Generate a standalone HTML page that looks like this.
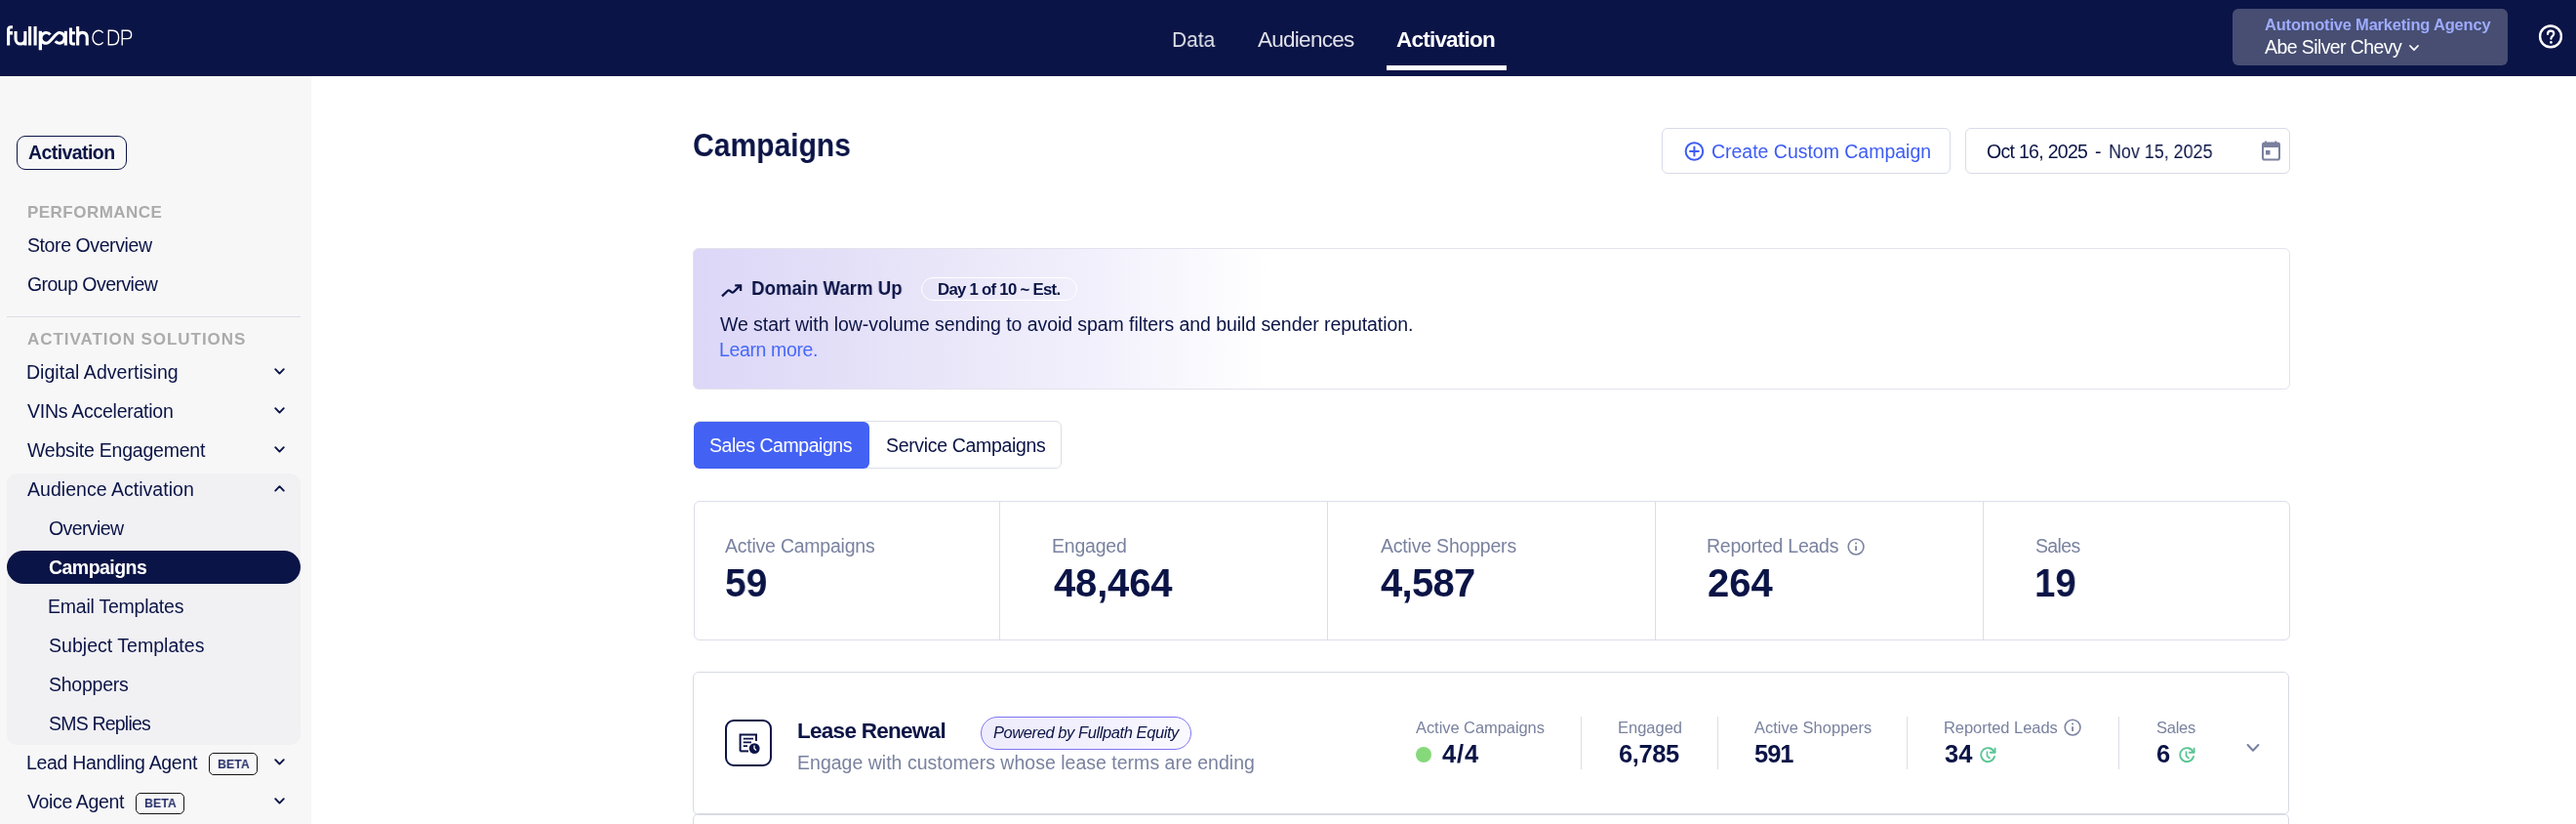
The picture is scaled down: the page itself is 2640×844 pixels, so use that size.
<!DOCTYPE html>
<html><head><meta charset="utf-8"><title>Campaigns</title>
<style>
html,body{margin:0;padding:0;}
body{width:2640px;height:844px;overflow:hidden;position:relative;background:#ffffff;font-family:'Liberation Sans', sans-serif;}
.t{position:absolute;white-space:nowrap;line-height:1;will-change:transform;}
.a{position:absolute;box-sizing:border-box;}
svg{position:absolute;overflow:visible;}
</style></head><body>
<!-- header -->
<div class="a" style="left:0;top:0;width:2640px;height:78px;background:#0b1446;"></div>
<svg style="left:0;top:0" width="140" height="60" viewBox="0 0 140 60"><g fill="none" stroke="#ffffff" stroke-width="3.1">
<path d="M8.6 46.5 V30.5 Q8.6 27.75 11.35 27.75 H13"/><path d="M8.6 33.8 H13" stroke-width="3.5"/>
<path d="M16.05 31.9 V40.1 A4.9 4.9 0 0 0 25.85 40.1 V31.9 M25.85 40 V46.5"/>
<path d="M30.6 27.1 V46.5 M36.1 27.1 V46.5"/>
<path d="M41.35 31.8 V51.3" stroke-width="3.3"/>
<path d="M51.54 35.43 A5.4 5.4 0 1 0 47.4 44.3 C51.5 44.3 56.7 33.5 60.8 33.5 A5.4 5.4 0 1 1 56.66 42.37"/>
<path d="M67.3 31.8 V46.5"/>
<path d="M72.45 28.6 V42.5 Q72.45 45 75 45 H76.9 M72.45 33.7 H76.9"/>
<path d="M79.65 27.1 V46.5 M79.65 39 Q79.65 33.4 84.45 33.4 Q89.25 33.4 89.25 39 V46.5"/>
</g><g fill="none" stroke="#ffffff" stroke-width="1.4">
<path d="M105.6 33.6 A6.1 7.3 0 1 0 105.6 43.4"/>
<path d="M111.3 31.2 H115.2 Q121.6 31.2 121.6 38.5 Q121.6 45.8 115.2 45.8 H111.3 Z"/>
<path d="M125.2 46.5 V31.2 H130.5 Q134.6 31.2 134.6 35.4 Q134.6 39.6 130.5 39.6 H125.2"/>
</g></svg>
<div class="a" style="left:1421px;top:67px;width:123px;height:5px;background:#ffffff;"></div>
<div class="a" style="left:2288px;top:9px;width:282px;height:58px;background:#474e72;border-radius:6px;"></div>
<svg style="left:2469px;top:46px" width="10" height="7" viewBox="0 0 10 7"><polyline points="1,1 5,5.2 9,1" fill="none" stroke="#ffffff" stroke-width="1.8" stroke-linecap="round" stroke-linejoin="round"/></svg>
<svg style="left:2601px;top:25px" width="26" height="26" viewBox="0 0 26 26"><circle cx="13" cy="12.4" r="10.9" fill="none" stroke="#ffffff" stroke-width="2.4"/><path d="M10 9.9 C10 8 11.5 6.7 13.2 6.7 C14.9 6.7 16.3 7.9 16.3 9.6 C16.3 11.8 13.4 12 13.4 14.7" fill="none" stroke="#ffffff" stroke-width="2.2" stroke-linecap="round"/><circle cx="13.4" cy="18.4" r="1.35" fill="#ffffff"/></svg>
<!-- sidebar -->
<div class="a" style="left:0;top:78px;width:319px;height:766px;background:#f7f7f7;"></div>
<div class="a" style="left:17px;top:139px;width:113px;height:35px;border:1.5px solid #0b1446;border-radius:9px;"></div>
<div class="a" style="left:7px;top:324px;width:301px;height:1.3px;background:#dcdee8;"></div>
<div class="a" style="left:7px;top:484.5px;width:301px;height:278.5px;background:#f1f1f4;border-radius:10px;"></div>
<div class="a" style="left:7px;top:564px;width:301px;height:34px;background:#0b1446;border-radius:17px;"></div>
<div class="a" style="left:214.1px;top:771.2px;width:49.6px;height:22.5px;border:1.5px solid #141414;border-radius:5px;"></div>
<div class="a" style="left:139.2px;top:811.5px;width:49.6px;height:22.5px;border:1.5px solid #141414;border-radius:5px;"></div>
<svg style="left:280.7px;top:377px" width="11" height="7" viewBox="0 0 11 7"><polyline points="1.2,1.2 5.5,5.6 9.8,1.2" fill="none" stroke="#0b1446" stroke-width="1.9" stroke-linecap="round" stroke-linejoin="round"/></svg>
<svg style="left:280.7px;top:416.8px" width="11" height="7" viewBox="0 0 11 7"><polyline points="1.2,1.2 5.5,5.6 9.8,1.2" fill="none" stroke="#0b1446" stroke-width="1.9" stroke-linecap="round" stroke-linejoin="round"/></svg>
<svg style="left:280.7px;top:456.8px" width="11" height="7" viewBox="0 0 11 7"><polyline points="1.2,1.2 5.5,5.6 9.8,1.2" fill="none" stroke="#0b1446" stroke-width="1.9" stroke-linecap="round" stroke-linejoin="round"/></svg>
<svg style="left:280.7px;top:497px" width="11" height="7" viewBox="0 0 11 7"><polyline points="1.2,5.6 5.5,1.2 9.8,5.6" fill="none" stroke="#0b1446" stroke-width="1.9" stroke-linecap="round" stroke-linejoin="round"/></svg>
<svg style="left:280.7px;top:776.8px" width="11" height="7" viewBox="0 0 11 7"><polyline points="1.2,1.2 5.5,5.6 9.8,1.2" fill="none" stroke="#0b1446" stroke-width="1.9" stroke-linecap="round" stroke-linejoin="round"/></svg>
<svg style="left:280.7px;top:816.8px" width="11" height="7" viewBox="0 0 11 7"><polyline points="1.2,1.2 5.5,5.6 9.8,1.2" fill="none" stroke="#0b1446" stroke-width="1.9" stroke-linecap="round" stroke-linejoin="round"/></svg>
<!-- main: buttons -->
<div class="a" style="left:1703px;top:131px;width:296px;height:47px;border:1.5px solid #d8dbe8;border-radius:6px;"></div>
<svg style="left:1726px;top:145px" width="21" height="21" viewBox="0 0 21 21"><circle cx="10.4" cy="10" r="8.8" fill="none" stroke="#3d5cf5" stroke-width="2"/><path d="M10.4 5.6 V14.4 M6 10 H14.8" stroke="#3d5cf5" stroke-width="2" stroke-linecap="round"/></svg>
<div class="a" style="left:2014px;top:131px;width:332.5px;height:47px;border:1.5px solid #d8dbe8;border-radius:6px;"></div>
<svg style="left:2318px;top:144px" width="19" height="20" viewBox="0 0 19 20"><path d="M4 0.5 V3 M14.2 0.5 V3" stroke="#7a809e" stroke-width="1.8"/><rect x="1" y="2.6" width="17" height="17" rx="1.8" fill="none" stroke="#7a809e" stroke-width="2"/><rect x="1" y="2.6" width="17" height="4.4" fill="#7a809e"/><rect x="4" y="10" width="4.5" height="4.5" fill="#7a809e"/></svg>
<!-- banner -->
<div class="a" style="left:710px;top:254px;width:1636.5px;height:145px;border:1.3px solid #e2e3ec;border-radius:6px;background:linear-gradient(90deg,#dcd7f7 0%,#e6e2f8 12%,#f3f1fc 26%,#ffffff 36%,#ffffff 100%);"></div>
<svg style="left:732px;top:282.8px" width="36" height="28" viewBox="0 0 36 28"><path d="M8 20.4 L13.6 15 Q14.8 13.8 16 14.8 L17.6 16.2 Q18.8 17.2 20 16 L26.4 9.6" fill="none" stroke="#0b1446" stroke-width="2.3" stroke-linecap="butt" stroke-linejoin="round"/><path d="M21.2 9.4 H27.1 V15" fill="none" stroke="#0b1446" stroke-width="2.3" stroke-linecap="butt" stroke-linejoin="miter"/></svg>
<div class="a" style="left:944.3px;top:284.3px;width:160.2px;height:23.3px;border:1.4px solid #ffffff;border-radius:12px;"></div>
<!-- tabs -->
<div class="a" style="left:710.9px;top:431.3px;width:377.6px;height:49px;border:1.5px solid #dcdee8;border-radius:6px;background:#fff;"></div>
<div class="a" style="left:710.9px;top:431.5px;width:180.5px;height:48.5px;background:#4361f3;border-radius:6px;"></div>
<!-- stats card -->
<div class="a" style="left:710.5px;top:513px;width:1636px;height:142.5px;border:1.5px solid #dcdee8;border-radius:6px;"></div>
<div class="a" style="left:1023.5px;top:513px;width:1.4px;height:142px;background:#dcdee8;"></div>
<div class="a" style="left:1359.8px;top:513px;width:1.4px;height:142px;background:#dcdee8;"></div>
<div class="a" style="left:1695.8px;top:513px;width:1.4px;height:142px;background:#dcdee8;"></div>
<div class="a" style="left:2032px;top:513px;width:1.4px;height:142px;background:#dcdee8;"></div>
<svg style="left:1892.5px;top:550.5px" width="18" height="18" viewBox="0 0 18 18"><circle cx="9.1" cy="9.1" r="7.9" fill="none" stroke="#7c84a2" stroke-width="1.6"/><path d="M9.1 8.2 V13.1" stroke="#7c84a2" stroke-width="1.8"/><rect x="8.2" y="4.6" width="1.8" height="1.7" fill="#7c84a2"/></svg>
<!-- lease card -->
<div class="a" style="left:710.4px;top:688.4px;width:1636px;height:146.6px;border:1.5px solid #d8dae4;border-radius:6px;"></div>
<div class="a" style="left:710.4px;top:833px;width:1636px;height:30px;border:1.5px solid #d8dae4;border-radius:6px;"></div>
<div class="a" style="left:743.2px;top:737px;width:47.6px;height:47.6px;border:2.8px solid #0b1446;border-radius:9px;"></div>
<svg style="left:757px;top:751px" width="23" height="22" viewBox="0 0 23 22"><path d="M1.6 18.4 V1.6 H18 V8" fill="none" stroke="#0b1446" stroke-width="2"/><path d="M1.6 18.4 H10" stroke="#0b1446" stroke-width="2"/><path d="M4.8 5.6 H15 M4.8 9.4 H13 M4.8 13.2 H9" stroke="#0b1446" stroke-width="1.8"/><circle cx="16.2" cy="15.6" r="5.4" fill="#0b1446"/><path d="M16 12.6 V15.8 L18 17.6" fill="none" stroke="#ffffff" stroke-width="1.3"/></svg>
<div class="a" style="left:1005px;top:734.2px;width:215.6px;height:33.6px;border:1.5px solid #8075f3;border-radius:17px;background:linear-gradient(90deg,#eeecfc,#f3f1fd 60%,#faf9fe);"></div>
<!-- metric dividers -->
<div class="a" style="left:1620px;top:734px;width:1.4px;height:53.5px;background:#dcdee8;"></div>
<div class="a" style="left:1759.8px;top:734px;width:1.4px;height:53.5px;background:#dcdee8;"></div>
<div class="a" style="left:1954px;top:734px;width:1.4px;height:53.5px;background:#dcdee8;"></div>
<div class="a" style="left:2170.8px;top:734px;width:1.4px;height:53.5px;background:#dcdee8;"></div>
<div class="a" style="left:1450.7px;top:765px;width:16.3px;height:16.3px;background:#86d97a;border-radius:50%;"></div>
<svg style="left:2115px;top:735.5px" width="18" height="18" viewBox="0 0 18 18"><circle cx="9.1" cy="9.1" r="7.9" fill="none" stroke="#7c84a2" stroke-width="1.6"/><path d="M9.1 8.2 V13.1" stroke="#7c84a2" stroke-width="1.8"/><rect x="8.2" y="4.6" width="1.8" height="1.7" fill="#7c84a2"/></svg>
<svg style="left:2028px;top:765px" width="18" height="17" viewBox="0 0 18 17"><path d="M15.6 5.2 A7 7 0 1 0 16 10" fill="none" stroke="#5bc596" stroke-width="1.9" stroke-linecap="round"/><path d="M16.6 1.8 V5.8 H11.8" fill="none" stroke="#5bc596" stroke-width="1.9" stroke-linejoin="round" stroke-linecap="round"/><path d="M8.5 5 V9.3 L11 11.5" fill="none" stroke="#5bc596" stroke-width="1.7" stroke-linecap="round"/></svg>
<svg style="left:2231.5px;top:765px" width="18" height="17" viewBox="0 0 18 17"><path d="M15.6 5.2 A7 7 0 1 0 16 10" fill="none" stroke="#5bc596" stroke-width="1.9" stroke-linecap="round"/><path d="M16.6 1.8 V5.8 H11.8" fill="none" stroke="#5bc596" stroke-width="1.9" stroke-linejoin="round" stroke-linecap="round"/><path d="M8.5 5 V9.3 L11 11.5" fill="none" stroke="#5bc596" stroke-width="1.7" stroke-linecap="round"/></svg>
<svg style="left:2301px;top:760.5px" width="16" height="11" viewBox="0 0 16 11"><polyline points="2.6,2 8,7.8 13.4,2" fill="none" stroke="#7880a2" stroke-width="2" stroke-linecap="round" stroke-linejoin="round"/></svg>

<div class="t" style="left:1201.00px;top:30.00px;font-size:22.5px;color:#dfe1ea;font-weight:normal;font-style:normal;transform:scaleX(0.9274);transform-origin:1.00px 0;">Data</div>
<div class="t" style="left:1289.00px;top:30.00px;font-size:22.5px;color:#dfe1ea;font-weight:normal;font-style:normal;letter-spacing:-0.728px;">Audiences</div>
<div class="t" style="left:1431.00px;top:30.00px;font-size:22.5px;color:#ffffff;font-weight:bold;font-style:normal;letter-spacing:-0.780px;">Activation</div>
<div class="t" style="left:2321.00px;top:17.00px;font-size:16.5px;color:#9eabff;font-weight:bold;font-style:normal;letter-spacing:-0.203px;">Automotive Marketing Agency</div>
<div class="t" style="left:2321.00px;top:39.00px;font-size:19.5px;color:#ffffff;font-weight:normal;font-style:normal;letter-spacing:-0.588px;">Abe Silver Chevy</div>
<div class="t" style="left:29.00px;top:147.00px;font-size:19.5px;color:#0b1446;font-weight:bold;font-style:normal;letter-spacing:-0.572px;">Activation</div>
<div class="t" style="left:27.80px;top:209.00px;font-size:17px;color:#ababab;font-weight:bold;font-style:normal;letter-spacing:0.467px;">PERFORMANCE</div>
<div class="t" style="left:28.30px;top:242.00px;font-size:19.5px;color:#0b1446;font-weight:normal;font-style:normal;letter-spacing:-0.408px;">Store Overview</div>
<div class="t" style="left:28.30px;top:282.00px;font-size:19.5px;color:#0b1446;font-weight:normal;font-style:normal;letter-spacing:-0.546px;">Group Overview</div>
<div class="t" style="left:28.30px;top:339.00px;font-size:17px;color:#ababab;font-weight:bold;font-style:normal;letter-spacing:0.952px;">ACTIVATION SOLUTIONS</div>
<div class="t" style="left:27.30px;top:372.00px;font-size:19.5px;color:#0b1446;font-weight:normal;font-style:normal;letter-spacing:0.038px;">Digital Advertising</div>
<div class="t" style="left:28.30px;top:412.00px;font-size:19.5px;color:#0b1446;font-weight:normal;font-style:normal;letter-spacing:-0.259px;">VINs Acceleration</div>
<div class="t" style="left:28.30px;top:452.00px;font-size:19.5px;color:#0b1446;font-weight:normal;font-style:normal;letter-spacing:-0.216px;">Website Engagement</div>
<div class="t" style="left:28.30px;top:492.00px;font-size:19.5px;color:#0b1446;font-weight:normal;font-style:normal;letter-spacing:0.032px;">Audience Activation</div>
<div class="t" style="left:49.80px;top:532.00px;font-size:19.5px;color:#0b1446;font-weight:normal;font-style:normal;letter-spacing:-0.598px;">Overview</div>
<div class="t" style="left:49.80px;top:572.00px;font-size:19.5px;color:#ffffff;font-weight:bold;font-style:normal;letter-spacing:-0.533px;">Campaigns</div>
<div class="t" style="left:48.80px;top:612.00px;font-size:19.5px;color:#0b1446;font-weight:normal;font-style:normal;letter-spacing:-0.236px;">Email Templates</div>
<div class="t" style="left:49.80px;top:652.00px;font-size:19.5px;color:#0b1446;font-weight:normal;font-style:normal;letter-spacing:0.026px;">Subject Templates</div>
<div class="t" style="left:49.80px;top:692.00px;font-size:19.5px;color:#0b1446;font-weight:normal;font-style:normal;letter-spacing:-0.246px;">Shoppers</div>
<div class="t" style="left:49.80px;top:732.00px;font-size:19.5px;color:#0b1446;font-weight:normal;font-style:normal;letter-spacing:-0.796px;">SMS Replies</div>
<div class="t" style="left:27.30px;top:772.00px;font-size:19.5px;color:#0b1446;font-weight:normal;font-style:normal;letter-spacing:-0.318px;">Lead Handling Agent</div>
<div class="t" style="left:222.60px;top:776.00px;font-size:13.5px;color:#27306a;font-weight:bold;font-style:normal;transform:scaleX(0.9167);transform-origin:0.00px 0;">BETA</div>
<div class="t" style="left:28.30px;top:812.00px;font-size:19.5px;color:#0b1446;font-weight:normal;font-style:normal;letter-spacing:-0.366px;">Voice Agent</div>
<div class="t" style="left:147.70px;top:816.00px;font-size:13.5px;color:#27306a;font-weight:bold;font-style:normal;transform:scaleX(0.9167);transform-origin:0.00px 0;">BETA</div>
<div class="t" style="left:710.20px;top:132.00px;font-size:33px;color:#0b1446;font-weight:bold;font-style:normal;transform:scaleX(0.9099);transform-origin:1.00px 0;">Campaigns</div>
<div class="t" style="left:1754.00px;top:146.00px;font-size:19.5px;color:#3d5cf5;font-weight:normal;font-style:normal;letter-spacing:-0.018px;">Create Custom Campaign</div>
<div class="t" style="left:2035.60px;top:146.00px;font-size:19.5px;color:#0b1446;font-weight:normal;font-style:normal;letter-spacing:-0.701px;">Oct 16, 2025</div>
<div class="t" style="left:2147.40px;top:146.00px;font-size:19.5px;color:#0b1446;font-weight:normal;font-style:normal;">-</div>
<div class="t" style="left:2161.00px;top:146.00px;font-size:19.5px;color:#0b1446;font-weight:normal;font-style:normal;transform:scaleX(0.9170);transform-origin:1.00px 0;">Nov 15, 2025</div>
<div class="t" style="left:769.90px;top:284.00px;font-size:21px;color:#0b1446;font-weight:bold;font-style:normal;transform:scaleX(0.8863);transform-origin:1.00px 0;">Domain Warm Up</div>
<div class="t" style="left:961.00px;top:289.00px;font-size:16.8px;color:#0b1446;font-weight:bold;font-style:normal;letter-spacing:-0.732px;">Day 1 of 10 ~ Est.</div>
<div class="t" style="left:737.90px;top:323.00px;font-size:19.5px;color:#0b1446;font-weight:normal;font-style:normal;letter-spacing:-0.069px;">We start with low-volume sending to avoid spam filters and build sender reputation.</div>
<div class="t" style="left:736.90px;top:349.00px;font-size:19.5px;color:#4668f7;font-weight:normal;font-style:normal;letter-spacing:-0.372px;">Learn more.</div>
<div class="t" style="left:727.20px;top:447.00px;font-size:19.5px;color:#ffffff;font-weight:normal;font-style:normal;letter-spacing:-0.456px;">Sales Campaigns</div>
<div class="t" style="left:908.00px;top:447.00px;font-size:19.5px;color:#0b1446;font-weight:normal;font-style:normal;letter-spacing:-0.339px;">Service Campaigns</div>
<div class="t" style="left:743.10px;top:550.00px;font-size:19.5px;color:#7a829f;font-weight:normal;font-style:normal;letter-spacing:-0.233px;">Active Campaigns</div>
<div class="t" style="left:742.90px;top:577.00px;font-size:40px;color:#0b1446;font-weight:bold;font-style:normal;transform:scaleX(0.9729);transform-origin:1.00px 0;">59</div>
<div class="t" style="left:1078.00px;top:550.00px;font-size:19.5px;color:#7a829f;font-weight:normal;font-style:normal;letter-spacing:-0.205px;">Engaged</div>
<div class="t" style="left:1079.80px;top:577.00px;font-size:40px;color:#0b1446;font-weight:bold;font-style:normal;letter-spacing:-0.180px;">48,464</div>
<div class="t" style="left:1414.60px;top:550.00px;font-size:19.5px;color:#7a829f;font-weight:normal;font-style:normal;letter-spacing:-0.203px;">Active Shoppers</div>
<div class="t" style="left:1415.40px;top:577.00px;font-size:40px;color:#0b1446;font-weight:bold;font-style:normal;letter-spacing:-0.713px;">4,587</div>
<div class="t" style="left:1749.30px;top:550.00px;font-size:19.5px;color:#7a829f;font-weight:normal;font-style:normal;letter-spacing:-0.255px;">Reported Leads</div>
<div class="t" style="left:1750.10px;top:577.00px;font-size:40px;color:#0b1446;font-weight:bold;font-style:normal;">264</div>
<div class="t" style="left:2085.80px;top:550.00px;font-size:19.5px;color:#7a829f;font-weight:normal;font-style:normal;letter-spacing:-0.632px;">Sales</div>
<div class="t" style="left:2084.60px;top:577.00px;font-size:40px;color:#0b1446;font-weight:bold;font-style:normal;transform:scaleX(0.9577);transform-origin:2.00px 0;">19</div>
<div class="t" style="left:817.00px;top:738.00px;font-size:22.5px;color:#0b1446;font-weight:bold;font-style:normal;letter-spacing:-0.724px;">Lease Renewal</div>
<div class="t" style="left:1018.20px;top:742.00px;font-size:16.5px;color:#0b1446;font-weight:normal;font-style:italic;letter-spacing:-0.420px;">Powered by Fullpath Equity</div>
<div class="t" style="left:817.00px;top:772.00px;font-size:19.5px;color:#7a829f;font-weight:normal;font-style:normal;letter-spacing:0.012px;">Engage with customers whose lease terms are ending</div>
<div class="t" style="left:1451.30px;top:737.00px;font-size:16.5px;color:#7a829f;font-weight:normal;font-style:normal;letter-spacing:-0.068px;">Active Campaigns</div>
<div class="t" style="left:1478.00px;top:760.00px;font-size:25.5px;color:#0b1446;font-weight:bold;font-style:normal;letter-spacing:0.867px;">4/4</div>
<div class="t" style="left:1657.50px;top:737.00px;font-size:16.5px;color:#7a829f;font-weight:normal;font-style:normal;letter-spacing:-0.015px;">Engaged</div>
<div class="t" style="left:1658.50px;top:760.00px;font-size:25.5px;color:#0b1446;font-weight:bold;font-style:normal;letter-spacing:-0.433px;">6,785</div>
<div class="t" style="left:1797.70px;top:737.00px;font-size:16.5px;color:#7a829f;font-weight:normal;font-style:normal;letter-spacing:0.007px;">Active Shoppers</div>
<div class="t" style="left:1797.70px;top:760.00px;font-size:25.5px;color:#0b1446;font-weight:bold;font-style:normal;letter-spacing:-1px;">591</div>
<div class="t" style="left:1991.50px;top:737.00px;font-size:16.5px;color:#7a829f;font-weight:normal;font-style:normal;letter-spacing:-0.051px;">Reported Leads</div>
<div class="t" style="left:1992.50px;top:760.00px;font-size:25.5px;color:#0b1446;font-weight:bold;font-style:normal;">34</div>
<div class="t" style="left:2209.50px;top:737.00px;font-size:16.5px;color:#7a829f;font-weight:normal;font-style:normal;letter-spacing:-0.256px;">Sales</div>
<div class="t" style="left:2209.50px;top:760.00px;font-size:25.5px;color:#0b1446;font-weight:bold;font-style:normal;">6</div>
</body></html>
